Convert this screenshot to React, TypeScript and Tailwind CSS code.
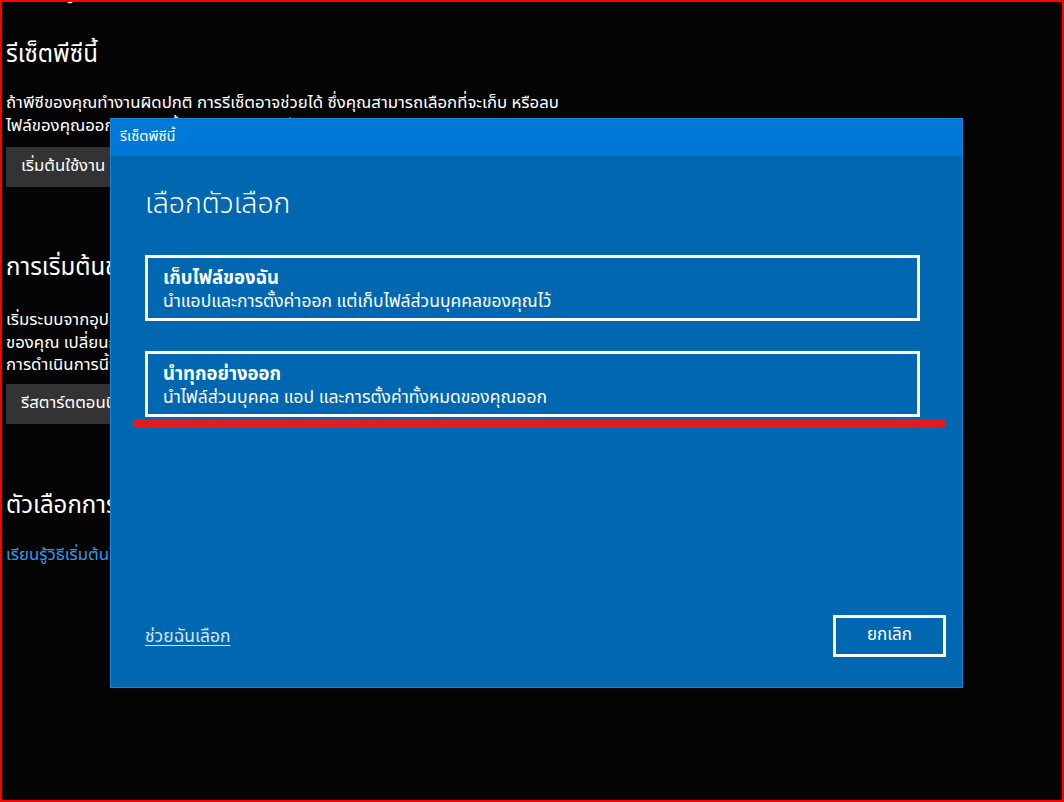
import React from "react";

const thai = "font-['Leelawadee_UI','Noto_Sans_Thai','Noto_Sans',sans-serif]";

function LeftPanel() {
  return (
    <div className="flex flex-col pl-[4px] text-white">
      <div className="h-[8px] overflow-hidden pl-[56px] text-[20px] leading-[8px]">
        <span className="relative -top-[14px]">กู้คืน</span>
      </div>
      <h1 className="mt-[31px] text-[24px] leading-[28px]">รีเซ็ตพีซีนี้</h1>
      <p className="mt-[23px] text-[16.8px] leading-[23px]">
        <span className="block whitespace-nowrap">
          ถ้าพีซีของคุณทำงานผิดปกติ การรีเซ็ตอาจช่วยได้ ซึ่งคุณสามารถเลือกที่จะเก็บ หรือลบ
        </span>
        <span className="block whitespace-nowrap">
          ไฟล์ของคุณออก แล้วติดตั้ง Windows ใหม่
        </span>
      </p>
      <button
        type="button"
        className="mt-[9px] h-[40px] w-[200px] bg-[#333333] px-[15px] text-left text-[16.8px]"
      >
        เริ่มต้นใช้งาน
      </button>

      <h2 className="mt-[67px] text-[24px] leading-[28px]">การเริ่มต้นขั้นสูง</h2>
      <p className="mt-[27px] text-[16.8px] leading-[22.5px]">
        <span className="block whitespace-nowrap">
          เริ่มระบบจากอุปกรณ์หรือดิสก์ (เช่น ไดรฟ์ USB หรือ DVD) เปลี่ยนการตั้งค่าเฟิร์มแวร์ของพีซี
        </span>
        <span className="block whitespace-nowrap">
          ของคุณ เปลี่ยนการตั้งค่าเริ่มต้นของ Windows หรือคืนค่า Windows จากอิมเมจระบบ
        </span>
        <span className="block whitespace-nowrap">
          การดำเนินการนี้จะรีสตาร์ตพีซีของคุณ
        </span>
      </p>
      <button
        type="button"
        className="mt-[7px] h-[40px] w-[200px] bg-[#333333] px-[15px] text-left text-[16.8px]"
      >
        รีสตาร์ตตอนนี้
      </button>

      <h2 className="mt-[68px] text-[24px] leading-[28px]">ตัวเลือกการกู้คืนเพิ่มเติม</h2>
      <a className="mt-[24px] text-[16.8px] leading-[22px] text-[#3a96e8]">
        เรียนรู้วิธีเริ่มต้นใหม่ด้วยการติดตั้ง Windows ใหม่ทั้งหมด
      </a>
    </div>
  );
}

function Option({ title, desc }: { title: string; desc: string }) {
  return (
    <button
      type="button"
      className="flex h-[66px] w-[775px] flex-col justify-center border-[3px] border-white px-[15px] pt-[3px] text-left text-white"
    >
      <span className="text-[18.5px] font-bold leading-[24px]">{title}</span>
      <span className="text-[17.5px] leading-[24px]">{desc}</span>
    </button>
  );
}

function ResetDialog() {
  return (
    <div className="absolute left-[108px] top-[116px] flex h-[570px] w-[853px] flex-col border border-[#1a86d9] bg-[#0067b0] text-white">
      <div className="flex h-[37px] items-center bg-[#0078d7] px-[9px] text-[14.5px]">
        รีเซ็ตพีซีนี้
      </div>
      <div className="flex flex-1 flex-col px-[34px] pb-[30px]">
        <h2 className="mt-[32px] text-[28.5px] font-light leading-[34px]">เลือกตัวเลือก</h2>
        <div className="mt-[33px] flex flex-col gap-[30px]">
          <Option title="เก็บไฟล์ของฉัน" desc="นำแอปและการตั้งค่าออก แต่เก็บไฟล์ส่วนบุคคลของคุณไว้" />
          <Option title="นำทุกอย่างออก" desc="นำไฟล์ส่วนบุคคล แอป และการตั้งค่าทั้งหมดของคุณออก" />
        </div>
        <div className="mt-auto flex items-center justify-between">
          <a className="mt-[3px] text-[17.5px] text-[#d6e6f5] underline underline-offset-[3px]">
            ช่วยฉันเลือก
          </a>
          <button
            type="button"
            className="mr-[-18px] h-[42px] w-[113px] border-[3px] border-white text-[17px]"
          >
            ยกเลิก
          </button>
        </div>
      </div>
      {/* red annotation underline */}
      <div className="absolute left-[22px] top-[300px] h-[9px] w-[813px] rounded-full bg-[#e31b1f]" />
    </div>
  );
}

export default function App() {
  return (
    <div
      className={`relative h-[802px] w-full overflow-hidden border-2 border-[#ff0000] bg-[#050505] ${thai}`}
    >
      <LeftPanel />
      <ResetDialog />
    </div>
  );
}
